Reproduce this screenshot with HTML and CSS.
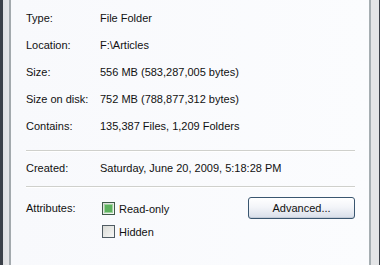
FILE: index.html
```html
<!DOCTYPE html>
<html>
<head>
<meta charset="utf-8">
<link rel="stylesheet" href="styles.css">
</head>
<body>
<div class="window">
  <div class="frame-left"></div>
  <div class="panel">
    <div class="row"><span class="label">Type:</span><span class="value">File Folder</span></div>
    <div class="row"><span class="label">Location:</span><span class="value">F:\Articles</span></div>
    <div class="row"><span class="label">Size:</span><span class="value">556 MB (583,287,005 bytes)</span></div>
    <div class="row"><span class="label">Size on disk:</span><span class="value">752 MB (788,877,312 bytes)</span></div>
    <div class="row"><span class="label">Contains:</span><span class="value">135,387 Files, 1,209 Folders</span></div>
    <div class="sep sep-first"></div>
    <div class="row"><span class="label">Created:</span><span class="value">Saturday, June 20, 2009, 5:18:28 PM</span></div>
    <div class="sep sep-second"></div>
    <div class="attrs">
      <span class="label attr-label">Attributes:</span>
      <div class="checks">
        <div class="check"><span class="box box-mixed"><span class="mark"></span></span><span>Read-only</span></div>
        <div class="check"><span class="box"></span><span>Hidden</span></div>
      </div>
      <button class="btn">Advanced...</button>
    </div>
  </div>
  <div class="frame-right"></div>
</div>
</body>
</html>
```
FILE: styles.css
```css
html, body {
  margin: 0;
  padding: 0;
}
body {
  width: 380px;
  height: 265px;
  overflow: hidden;
  font-family: "Liberation Sans", Arial, sans-serif;
  font-size: 11px;
  color: #111;
}
.window {
  display: flex;
  height: 265px;
}
.frame-left {
  width: 9px;
  border-right: 2px solid #a3a9ad;
  background: linear-gradient(to right, #3b4048 0, #3b4048 3px, #dfe0e2 3px, #e6e6e8 9px);
}
.panel {
  flex: 1;
  background: linear-gradient(to right, #f8f9fc, #fbfcfe);
  padding: 4px 14px 0 15px;
  display: flex;
  flex-direction: column;
}
.frame-right {
  width: 8px;
  border-left: 2px solid #a6aeb2;
  border-right: 1px solid #3b4048;
  background: #e4e5e7;
}
.row {
  display: flex;
  align-items: center;
  height: 27px;
}
.label {
  width: 74px;
  flex: none;
}
.sep {
  height: 1px;
  background: #cfd0cc;
  border-bottom: 1px solid #ffffff;
}
.sep-first {
  margin: 11px 0 2px;
}
.sep-second {
  margin: 5px 0 0;
}
.attrs {
  display: flex;
  align-items: flex-start;
  padding-top: 9px;
}
.attr-label {
  line-height: 23px;
}
.checks {
  display: flex;
  flex-direction: column;
  margin-left: 2px;
}
.check {
  display: flex;
  align-items: center;
  height: 23px;
  gap: 4px;
}
.box {
  width: 11px;
  height: 11px;
  border: 1px solid #4f5b63;
  background: linear-gradient(135deg, #d9dad6, #f7f7f5);
  display: flex;
  align-items: center;
  justify-content: center;
}
.box-mixed {
  border-color: #3e5a48;
}
.mark {
  width: 7px;
  height: 7px;
  background: #5eb15e;
  box-shadow: 0 0 0 1px #9fd39f;
}
.btn {
  margin-left: auto;
  width: 107px;
  height: 22px;
  border: 1px solid #3a5670;
  border-radius: 3px;
  background: linear-gradient(to bottom, #ffffff 0%, #f3f5f9 45%, #d8dee9 100%);
  font-family: "Liberation Sans", Arial, sans-serif;
  font-size: 11px;
  color: #111;
  padding: 0;
  box-shadow: inset 0 -1px 0 #c4ccd8;
}
```
